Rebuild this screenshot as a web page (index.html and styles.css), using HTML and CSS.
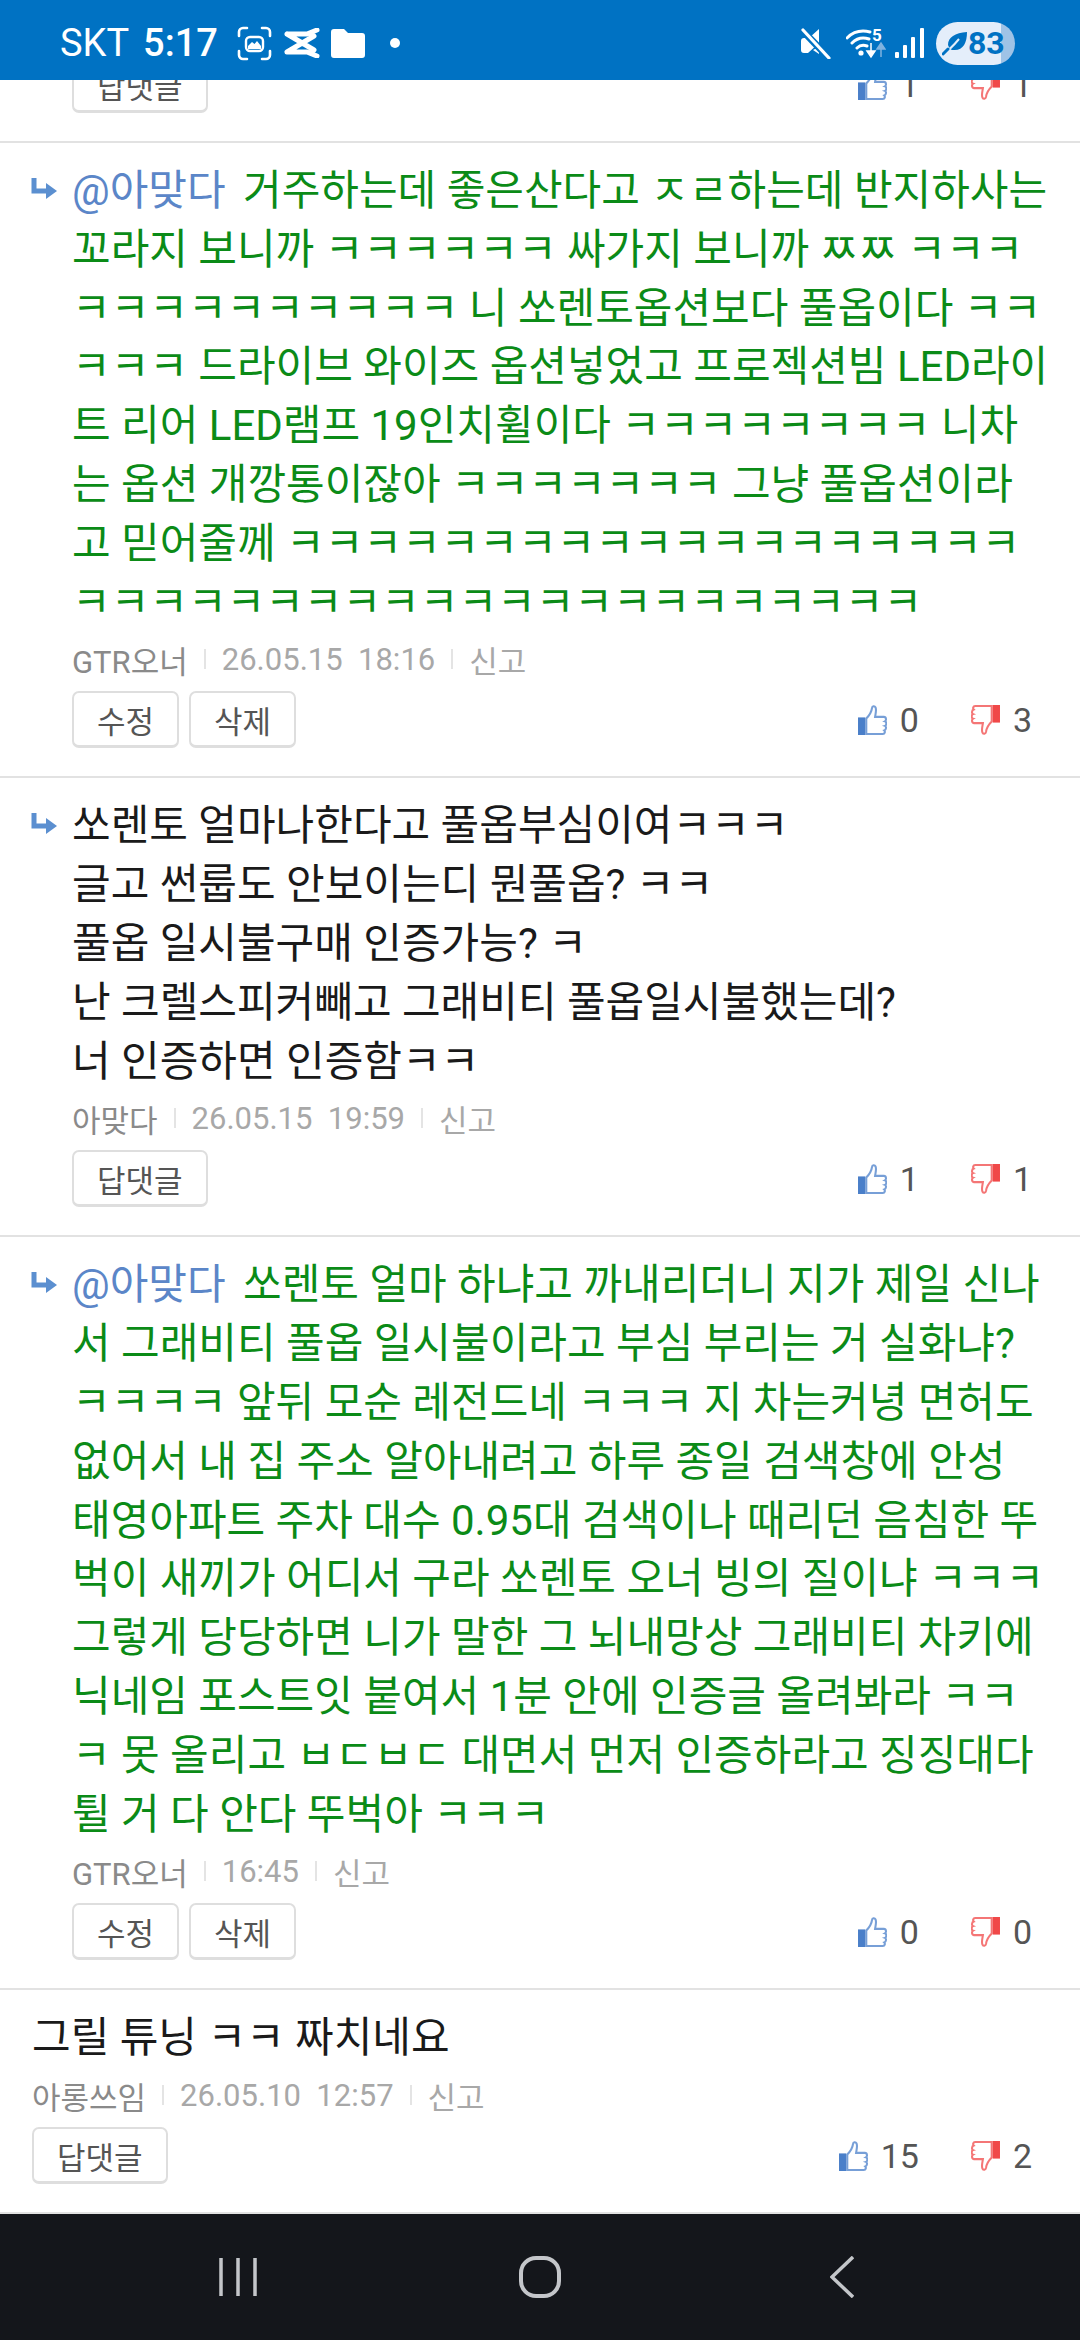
FILE: index.html
```html
<!DOCTYPE html>
<html lang="ko">
<head>
  <meta charset="utf-8">
  <title>댓글</title>
  <link rel="stylesheet" href="styles.css">
</head>
<body>
  <svg class="sprite" width="0" height="0">
    <symbol id="thumb" viewBox="0 0 28 29">
      <path class="thumb-hand" d="M8 13C11 10 13 7 13.5 3C13.8 1 16 .6 17 2.5C18 5 17 8 16.5 11.5H25C27.5 11.5 27.5 15 26 15.8C27.8 16.3 27.8 19.6 26 20.2C27.5 20.8 27.4 24 25.4 24.6C26.4 25.6 26 28 24 28H8Z"/>
      <rect class="thumb-bar" x="0" y="12" width="7" height="17"/>
    </symbol>
    <symbol id="arrow" viewBox="0 0 27 22">
      <path d="M3 0V13H17" fill="none" stroke="currentColor" stroke-width="5"/>
      <path d="M15 5L26 13L15 21Z" fill="currentColor"/>
    </symbol>
  </svg>

  <header class="status-bar">
    <div class="status-left">
      <span class="carrier">SKT</span>
      <span class="clock">5:17</span>
      <svg class="ic-shot" width="35" height="35" viewBox="0 0 35 35">
        <path d="M10 2H6a4 4 0 0 0-4 4v4M25 2h4a4 4 0 0 1 4 4v4M10 33H6a4 4 0 0 1-4-4v-4M25 33h4a4 4 0 0 0 4-4v-4" fill="none" stroke="#fff" stroke-width="2.6" stroke-linecap="round"/>
        <rect x="9" y="11" width="17" height="14" rx="4" fill="none" stroke="#fff" stroke-width="2.4"/>
        <path d="M11 20L15 16L17.500 18L20 15L24 20V23H11Z" fill="#fff"/>
      </svg>
      <svg class="ic-cut" width="37" height="30" viewBox="0 0 37 30">
        <path d="M4 6H24L34 2M4 24H24L34 28M4 6L31 22M4 24L31 8" fill="none" stroke="#fff" stroke-width="5" stroke-linecap="round" stroke-linejoin="round"/>
      </svg>
      <svg class="ic-folder" width="34" height="29" viewBox="0 0 34 29">
        <path d="M0 3a3 3 0 0 1 3-3h10l4 4h14a3 3 0 0 1 3 3v19a3 3 0 0 1-3 3H3a3 3 0 0 1-3-3Z" fill="#fff"/>
      </svg>
      <span class="dot"></span>
    </div>
    <div class="status-right">
      <svg class="ic-mute" width="31" height="31" viewBox="0 0 31 31">
        <path d="M19 1V15L8 25H4a3 3 0 0 1-3-3v-9a3 3 0 0 1 3-3h5Z" fill="#fff"/>
        <path d="M19 19v7l-6-4Z" fill="#fff"/>
        <path d="M2 2L29 30" stroke="#0072c3" stroke-width="7"/>
        <path d="M3 2L29 30" stroke="#fff" stroke-width="3.200" stroke-linecap="round"/>
      </svg>
      <svg class="ic-wifi" width="40" height="32" viewBox="0 0 40 32">
        <path d="M1 11C8 4 16 3 24 5M6 16C11 11 17 10 23 12M11 21C14 18 18 18 21 19" fill="none" stroke="#fff" stroke-width="3" stroke-linecap="round"/>
        <circle cx="15" cy="26" r="2.600" fill="#fff"/>
        <text x="26" y="14" class="wifi-num">5</text>
        <path d="M25 16V27M21 24L25 30L29 24Z" fill="#fff" stroke="#fff" stroke-width="1.500"/>
        <path d="M35 30V20M31 22L35 16L39 22Z" fill="#7fb3e0" stroke="#7fb3e0" stroke-width="1.500"/>
      </svg>
      <svg class="ic-signal" width="30" height="30" viewBox="0 0 30 30">
        <rect x="0" y="24" width="4" height="6" rx="1" fill="#fff"/>
        <rect x="8" y="17" width="4" height="13" rx="1" fill="#fff"/>
        <rect x="16" y="9" width="4" height="21" rx="1" fill="#fff"/>
        <rect x="25" y="0" width="4" height="30" rx="1" fill="#fff"/>
      </svg>
      <div class="battery">
        <svg width="26" height="26" viewBox="0 0 26 26">
          <path d="M6 15C6 7 13 3 25 2C25 13 21 21 11 20C9 20 7.500 19 6 15Z" fill="#0072c3"/>
          <path d="M1 24C6 21 12 15 17 9" fill="none" stroke="#e4eefa" stroke-width="2"/>
          <path d="M1 24L6 19" fill="none" stroke="#0072c3" stroke-width="3" stroke-linecap="round"/>
        </svg>
        <span>83</span>
      </div>
    </div>
  </header>

  <main class="list">
    <section class="comment comment-cut">
      <div class="comment-body no-arrow">
        <div class="actions">
          <div class="buttons"><button class="btn">답댓글</button></div>
          <div class="votes">
            <span class="vote up"><svg class="thumb"><use href="#thumb"/></svg>1</span>
            <span class="vote down"><svg class="thumb"><use href="#thumb"/></svg>1</span>
          </div>
        </div>
      </div>
    </section>

    <section class="comment">
      <svg class="reply-arrow"><use href="#arrow"/></svg>
      <div class="comment-body">
        <p class="text green"><span class="mention">@아맞다</span> 거주하는데 좋은산다고 ㅈㄹ하는데 반지하사는 꼬라지 보니까 ㅋㅋㅋㅋㅋㅋ 싸가지 보니까 ㅉㅉ ㅋㅋㅋ<br>ㅋㅋㅋㅋㅋㅋㅋㅋㅋㅋ 니 쏘렌토옵션보다 풀옵이다 ㅋㅋㅋㅋㅋ 드라이브 와이즈 옵션넣었고 프로젝션빔 LED라이트 리어 LED램프 19인치휠이다 ㅋㅋㅋㅋㅋㅋㅋㅋ 니차는 옵션 개깡통이잖아 ㅋㅋㅋㅋㅋㅋㅋ 그냥 풀옵션이라고 믿어줄께 ㅋㅋㅋㅋㅋㅋㅋㅋㅋㅋㅋㅋㅋㅋㅋㅋㅋㅋㅋㅋㅋㅋㅋㅋㅋㅋㅋㅋㅋㅋㅋㅋㅋㅋㅋㅋㅋㅋㅋㅋㅋ</p>
        <div class="meta">
          <span class="author">GTR오너</span><span class="sep"></span><span>26.05.15&nbsp; 18:16</span><span class="sep"></span><span>신고</span>
        </div>
        <div class="actions">
          <div class="buttons"><button class="btn">수정</button><button class="btn">삭제</button></div>
          <div class="votes">
            <span class="vote up"><svg class="thumb"><use href="#thumb"/></svg>0</span>
            <span class="vote down"><svg class="thumb"><use href="#thumb"/></svg>3</span>
          </div>
        </div>
      </div>
    </section>

    <section class="comment">
      <svg class="reply-arrow"><use href="#arrow"/></svg>
      <div class="comment-body">
        <p class="text">쏘렌토 얼마나한다고 풀옵부심이여ㅋㅋㅋ<br>글고 썬룹도 안보이는디 뭔풀옵? ㅋㅋ<br>풀옵 일시불구매 인증가능? ㅋ<br>난 크렐스피커빼고 그래비티 풀옵일시불했는데?<br>너 인증하면 인증함ㅋㅋ</p>
        <div class="meta">
          <span class="author">아맞다</span><span class="sep"></span><span>26.05.15&nbsp; 19:59</span><span class="sep"></span><span>신고</span>
        </div>
        <div class="actions">
          <div class="buttons"><button class="btn">답댓글</button></div>
          <div class="votes">
            <span class="vote up"><svg class="thumb"><use href="#thumb"/></svg>1</span>
            <span class="vote down"><svg class="thumb"><use href="#thumb"/></svg>1</span>
          </div>
        </div>
      </div>
    </section>

    <section class="comment">
      <svg class="reply-arrow"><use href="#arrow"/></svg>
      <div class="comment-body">
        <p class="text green"><span class="mention">@아맞다</span> 쏘렌토 얼마 하냐고 까내리더니 지가 제일 신나서 그래비티 풀옵 일시불이라고 부심 부리는 거 실화냐? ㅋㅋㅋㅋ 앞뒤 모순 레전드네 ㅋㅋㅋ 지 차는커녕 면허도 없어서 내 집 주소 알아내려고 하루 종일 검색창에 안성 태영아파트 주차 대수 0.95대 검색이나 때리던 음침한 뚜벅이 새끼가 어디서 구라 쏘렌토 오너 빙의 질이냐 ㅋㅋㅋ 그렇게 당당하면 니가 말한 그 뇌내망상 그래비티 차키에 닉네임 포스트잇 붙여서 1분 안에 인증글 올려봐라 ㅋㅋㅋ 못 올리고 ㅂㄷㅂㄷ 대면서 먼저 인증하라고 징징대다 튈 거 다 안다 뚜벅아 ㅋㅋㅋ</p>
        <div class="meta">
          <span class="author">GTR오너</span><span class="sep"></span><span>16:45</span><span class="sep"></span><span>신고</span>
        </div>
        <div class="actions">
          <div class="buttons"><button class="btn">수정</button><button class="btn">삭제</button></div>
          <div class="votes">
            <span class="vote up"><svg class="thumb"><use href="#thumb"/></svg>0</span>
            <span class="vote down"><svg class="thumb"><use href="#thumb"/></svg>0</span>
          </div>
        </div>
      </div>
    </section>

    <section class="comment comment-top">
      <div class="comment-body">
        <p class="text">그릴 튜닝 ㅋㅋ 짜치네요</p>
        <div class="meta">
          <span class="author">아롱쓰임</span><span class="sep"></span><span>26.05.10&nbsp; 12:57</span><span class="sep"></span><span>신고</span>
        </div>
        <div class="actions">
          <div class="buttons"><button class="btn">답댓글</button></div>
          <div class="votes">
            <span class="vote up"><svg class="thumb"><use href="#thumb"/></svg>15</span>
            <span class="vote down"><svg class="thumb"><use href="#thumb"/></svg>2</span>
          </div>
        </div>
      </div>
    </section>
  </main>

  <nav class="nav-bar">
    <div class="nav-item">
      <svg width="38" height="40" viewBox="0 0 38 40"><path d="M2 1V39M19 1V39M36 1V39" stroke="#c4c6ca" stroke-width="3.500"/></svg>
    </div>
    <div class="nav-item">
      <svg width="42" height="42" viewBox="0 0 42 42"><rect x="2" y="2" width="38" height="38" rx="15" fill="none" stroke="#c4c6ca" stroke-width="4"/></svg>
    </div>
    <div class="nav-item">
      <svg width="24" height="42" viewBox="0 0 24 42"><path d="M23 1L2 21L23 41" fill="none" stroke="#c4c6ca" stroke-width="3.500"/></svg>
    </div>
  </nav>
</body>
</html>
```

FILE: styles.css
```css
* {
  box-sizing: border-box;
}

body {
  margin: 0;
  background-color: #fff;
  font-family: Roboto, "Noto Sans CJK KR", sans-serif;
}

.sprite {
  display: block;
  height: 0;
}

.status-bar {
  display: flex;
  justify-content: space-between;
  align-items: center;
  height: 80px;
  padding: 6px 65px 0 60px;
  background-color: #0072c3;
  color: #fff;
  font-size: 38px;
}

.status-left,
.status-right {
  display: flex;
  align-items: center;
}

.carrier {
  margin-right: 14px;
}

.clock {
  margin-right: 19px;
  font-weight: 500;
}

.ic-cut {
  margin: 0 11px 0 11px;
}

.dot {
  width: 10px;
  height: 10px;
  margin-left: 25px;
  background-color: #fff;
  border-radius: 50%;
}

.ic-mute {
  margin-right: 15px;
}

.ic-wifi {
  margin-right: 9px;
}

.ic-signal {
  margin-right: 11px;
}

.wifi-num {
  fill: #fff;
  font-size: 17px;
  font-weight: 700;
}

.battery {
  display: flex;
  align-items: center;
  width: 79px;
  height: 43px;
  padding-left: 6px;
  border-radius: 22px;
  background: linear-gradient(90deg, #e4eefa 82%, #9fc3e6 82%);
  color: #0072c3;
  font-size: 32px;
  font-weight: 700;
}

.comment {
  display: flex;
  padding: 19px 30px 28px 31px;
  border-bottom: 2px solid #e2e2e2;
}

.comment-cut {
  align-items: flex-end;
  height: 63px;
  padding-top: 0;
  overflow: hidden;
}

.comment-top {
  padding-left: 32px;
}

.reply-arrow {
  flex: none;
  width: 27px;
  height: 22px;
  margin: 16px 14px 0 0;
  color: #5b8fd0;
}

.comment-body {
  flex: 1;
  min-width: 0;
}

.no-arrow {
  margin-left: 41px;
}

.text {
  margin: 0;
  font-size: 42px;
  line-height: 1.4;
  color: #1a1a1a;
  word-break: break-all;
}

.green {
  color: #0b8b17;
}

.mention {
  margin-right: 7px;
  color: #5b86c8;
}

.meta {
  display: flex;
  align-items: center;
  height: 44px;
  margin: 5px 0 10px;
  font-size: 31px;
  color: #a8a8a8;
}

.author {
  color: #8a8a8a;
}

.sep {
  width: 2px;
  height: 20px;
  margin: 0 16px;
  background-color: #e4e4e4;
}

.actions {
  display: flex;
  justify-content: space-between;
  align-items: center;
}

.buttons {
  display: flex;
  gap: 10px;
}

.btn {
  height: 57px;
  padding: 0 23px;
  border: 2px solid #dedede;
  border-bottom-width: 3px;
  border-radius: 7px;
  background-color: #fff;
  font-family: inherit;
  font-size: 31px;
  color: #555;
}

.votes {
  display: flex;
  gap: 52px;
  margin-right: 18px;
}

.vote {
  display: flex;
  align-items: center;
  gap: 13px;
  font-size: 34px;
  color: #555;
}

.thumb {
  width: 29px;
  height: 30px;
}

.up .thumb {
  color: #4a7fc9;
}

.down .thumb {
  color: #f04848;
  transform: rotate(180deg);
}

.thumb-hand {
  fill: #fff;
  stroke: currentColor;
  stroke-opacity: 0.75;
  stroke-width: 2;
}

.thumb-bar {
  fill: currentColor;
}

.nav-bar {
  display: flex;
  justify-content: center;
  align-items: center;
  height: 126px;
  background-color: #14161b;
}

.nav-item {
  display: flex;
  justify-content: center;
  width: 302px;
}
```
